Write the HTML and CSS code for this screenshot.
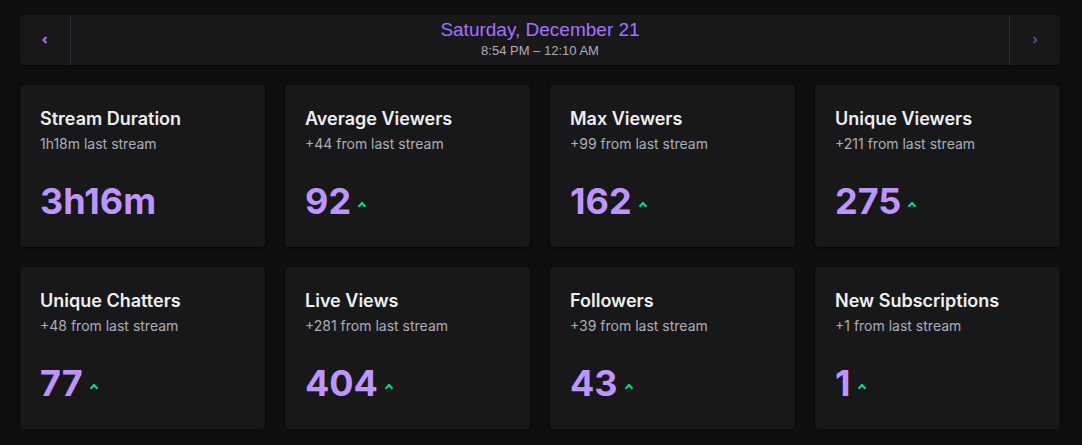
FILE: index.html
```html
<!DOCTYPE html>
<html lang="en">
    <head>
        <meta charset="UTF-8" />
        <meta name="viewport" content="width=device-width, initial-scale=1.0" />
        <title>Stream Stats</title>

        <link rel="stylesheet" href="styles.css">
    </head>
    <body>
        <div class="container">
            <div class="date-nav">
                <button class="nav-btn">
                    <svg width="6" height="8" viewBox="0 0 6 8"><path d="M4.5 1 L1.5 4 L4.5 7" fill="none" stroke="currentColor" stroke-width="2"/></svg>
                </button>
                <div class="date-info">
                    <div class="date-title">Saturday, December 21</div>
                    <div class="date-time">8:54 PM – 12:10 AM</div>
                </div>
                <button class="nav-btn disabled">
                    <svg width="6" height="8" viewBox="0 0 6 8"><path d="M1.5 1 L4.5 4 L1.5 7" fill="none" stroke="currentColor" stroke-width="2"/></svg>
                </button>
            </div>

            <div class="stats">
                <div class="card">
                    <div class="card-title">Stream Duration</div>
                    <div class="card-sub">1h18m last stream</div>
                    <div class="card-value">3h16m</div>
                </div>
                <div class="card">
                    <div class="card-title">Average Viewers</div>
                    <div class="card-sub">+44 from last stream</div>
                    <div class="card-value">92 <span class="up"></span></div>
                </div>
                <div class="card">
                    <div class="card-title">Max Viewers</div>
                    <div class="card-sub">+99 from last stream</div>
                    <div class="card-value">162 <span class="up"></span></div>
                </div>
                <div class="card">
                    <div class="card-title">Unique Viewers</div>
                    <div class="card-sub">+211 from last stream</div>
                    <div class="card-value">275 <span class="up"></span></div>
                </div>
                <div class="card">
                    <div class="card-title">Unique Chatters</div>
                    <div class="card-sub">+48 from last stream</div>
                    <div class="card-value">77 <span class="up"></span></div>
                </div>
                <div class="card">
                    <div class="card-title">Live Views</div>
                    <div class="card-sub">+281 from last stream</div>
                    <div class="card-value">404 <span class="up"></span></div>
                </div>
                <div class="card">
                    <div class="card-title">Followers</div>
                    <div class="card-sub">+39 from last stream</div>
                    <div class="card-value">43 <span class="up"></span></div>
                </div>
                <div class="card">
                    <div class="card-title">New Subscriptions</div>
                    <div class="card-sub">+1 from last stream</div>
                    <div class="card-value">1 <span class="up"></span></div>
                </div>
            </div>
        </div>
    </body>
</html>
```

FILE: styles.css
```css
body {
    font-family: Inter, "Liberation Sans", sans-serif;
    background-color: #0e0e10;
    color: #efeff1;
    margin: 0;
}

.container {
    padding: 15px 22px 0 20px;
}

.date-nav {
    display: flex;
    height: 50px;
    background-color: #18181b;
    border-radius: 2px;
    box-shadow: 0 1px 2px rgba(0, 0, 0, 0.6);
}

.nav-btn {
    width: 51px;
    background: none;
    border: none;
    color: #a970ff;
    display: flex;
    align-items: center;
    justify-content: center;
    padding: 0;
}

.nav-btn:first-child {
    border-right: 1px solid #2c2c31;
}

.nav-btn:last-child {
    border-left: 1px solid #2c2c31;
}

.nav-btn.disabled {
    color: #54457a;
}

.date-info {
    flex: 1;
    text-align: center;
    padding-top: 4px;
}

.date-title {
    font-family: "Liberation Sans", Arial, sans-serif;
    font-size: 19px;
    line-height: 22px;
    color: #a970ff;
}

.date-time {
    font-family: "Liberation Sans", Arial, sans-serif;
    font-size: 13px;
    line-height: 16px;
    margin-top: 2px;
    color: #adadb8;
}

.stats {
    display: grid;
    grid-template-columns: repeat(4, 1fr);
    gap: 20px;
    margin-top: 20px;
}

.card {
    height: 162px;
    box-sizing: border-box;
    background-color: #18181b;
    border-radius: 4px;
    padding: 23px 20px 0 20px;
    box-shadow: 0 1px 3px rgba(0, 0, 0, 0.7);
}

.card-title {
    font-size: 18px;
    font-weight: 600;
    line-height: 22px;
}

.card-sub {
    font-size: 14px;
    line-height: 20px;
    margin-top: 4px;
    color: #adadb8;
}

.card-value {
    margin-top: 25px;
    font-size: 36px;
    font-weight: 700;
    line-height: 44px;
    color: #bf94ff;
    display: flex;
    align-items: center;
}

.up {
    display: inline-block;
    width: 4px;
    height: 4px;
    border-top: 2px solid #00e08a;
    border-left: 2px solid #00e08a;
    transform: rotate(45deg);
    margin-left: 8px;
    margin-top: 10px;
}
```
